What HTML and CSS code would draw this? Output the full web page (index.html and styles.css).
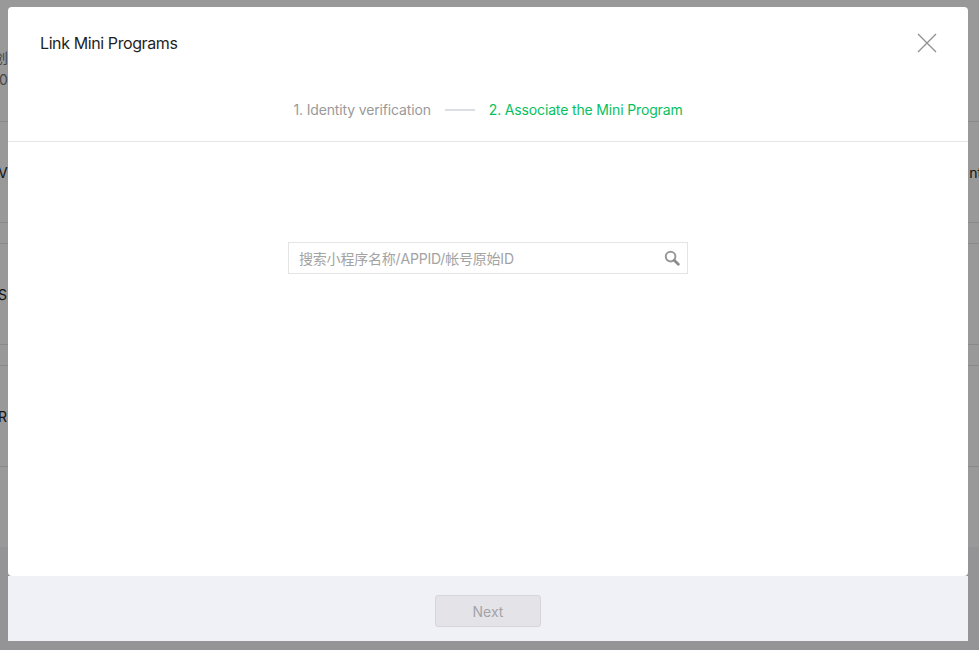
FILE: index.html
```html
<!DOCTYPE html>
<html lang="en">
<head>
<meta charset="utf-8">
<title>Link Mini Programs</title>
<link rel="stylesheet" href="styles.css">
</head>
<body>
<div class="page">
  <div class="page-head">
    <div class="page-head-title">创建</div>
    <div class="page-head-sub">0</div>
  </div>
  <div class="rows">
    <div class="row"><span class="row-name">V</span><span class="row-action">nt</span></div>
    <div class="row"><span class="row-name">S</span></div>
    <div class="row"><span class="row-name">R</span></div>
  </div>
  <div class="page-foot"></div>
</div>
<div class="overlay"></div>
<div class="modal">
  <div class="modal-body">
    <div class="modal-head">
      <h2 class="modal-title">Link Mini Programs</h2>
      <svg class="modal-close" width="20" height="20" viewBox="0 0 20 20"><path d="M1 1 L19 19 M19 1 L1 19" stroke="#8f8f8f" stroke-width="1.3" fill="none"/></svg>
    </div>
    <div class="steps">
      <span class="step">1. Identity verification</span>
      <span class="step-line"></span>
      <span class="step step-active">2. Associate the Mini Program</span>
    </div>
    <div class="search-wrap">
      <div class="search">
        <span class="search-placeholder">搜索小程序名称/APPID/帐号原始ID</span>
        <svg class="search-icon" width="16" height="16" viewBox="0 0 16 16"><circle cx="6.6" cy="6.6" r="4.8" stroke="#989898" stroke-width="2" fill="none"/><path d="M10.2 10.2 L14.3 14.2" stroke="#8c8c8c" stroke-width="2.8" stroke-linecap="round"/></svg>
      </div>
    </div>
  </div>
  <div class="modal-foot">
    <button class="btn-next" type="button" disabled>Next</button>
  </div>
</div>
</body>
</html>
```
FILE: styles.css
```css
html, body {
  margin: 0;
  padding: 0;
  height: 100%;
  overflow: hidden;
  font-family: Inter, "Noto Sans CJK SC", sans-serif;
  background: #fff;
}

.page {
  height: 650px;
  overflow: hidden;
  color: #222;
  font-size: 14px;
}

.page-head {
  height: 122px;
  box-sizing: border-box;
  padding-top: 47px;
  border-bottom: 1px solid #e4e4e4;
  color: #777;
  line-height: 22px;
}

.page-head-title {
  margin-left: -6px;
}

.page-head-sub {
  margin-left: -1px;
}

.rows {
  display: flex;
  flex-direction: column;
  gap: 20px;
}

.row {
  height: 100px;
  display: flex;
  align-items: center;
  justify-content: space-between;
  border-bottom: 1px solid #e4e4e4;
}

.rows .row + .row {
  border-top: 1px solid #e4e4e4;
}

.row-name {
  margin-left: -2px;
}

.row-action {
  margin-right: -3px;
}

.page-foot {
  margin-top: 80px;
  height: 103px;
  background: #f7f7fa;
}

.overlay {
  position: absolute;
  inset: 0;
  background: rgba(0, 0, 0, 0.4);
}

.modal {
  position: absolute;
  left: 8px;
  top: 7px;
  width: 960px;
  height: 634px;
  display: flex;
  flex-direction: column;
}

.modal-body {
  flex: 1;
  display: flex;
  flex-direction: column;
  background: #fff;
  border-radius: 4px;
}

.modal-head {
  display: flex;
  align-items: center;
  justify-content: space-between;
  padding: 26px 31px 0 32px;
  height: 20px;
}

.modal-title {
  margin: 0;
  font-size: 16px;
  font-weight: 400;
  line-height: 20px;
  letter-spacing: -0.4px;
  color: #1f1f1f;
}

.steps {
  display: flex;
  align-items: center;
  justify-content: center;
  gap: 14px;
  margin-top: 47px;
  padding-bottom: 21px;
  border-bottom: 1px solid #e4e4e4;
}

.step {
  font-size: 14px;
  line-height: 20px;
  letter-spacing: -0.15px;
  color: #9a9a9a;
}

.step-active {
  color: #07c160;
}

.step-line {
  width: 30px;
  height: 2px;
  background: #dcdee5;
}

.search-wrap {
  display: flex;
  justify-content: center;
  padding-top: 100px;
}

.search {
  width: 400px;
  height: 32px;
  box-sizing: border-box;
  display: flex;
  align-items: center;
  justify-content: space-between;
  padding: 0 7px 0 10px;
  border: 1px solid #e4e4e4;
}

.search-placeholder {
  font-size: 14px;
  letter-spacing: -0.2px;
  color: #a3a3a3;
}

.modal-foot {
  height: 65px;
  display: flex;
  align-items: center;
  justify-content: center;
  background: #f0f1f7;
}

.btn-next {
  width: 106px;
  height: 32px;
  margin-top: 5px;
  box-sizing: border-box;
  border: 1px solid #d5d5da;
  border-radius: 3px;
  background: #e3e3e8;
  color: #a3a3a8;
  font-family: inherit;
  font-size: 14px;
}
```
